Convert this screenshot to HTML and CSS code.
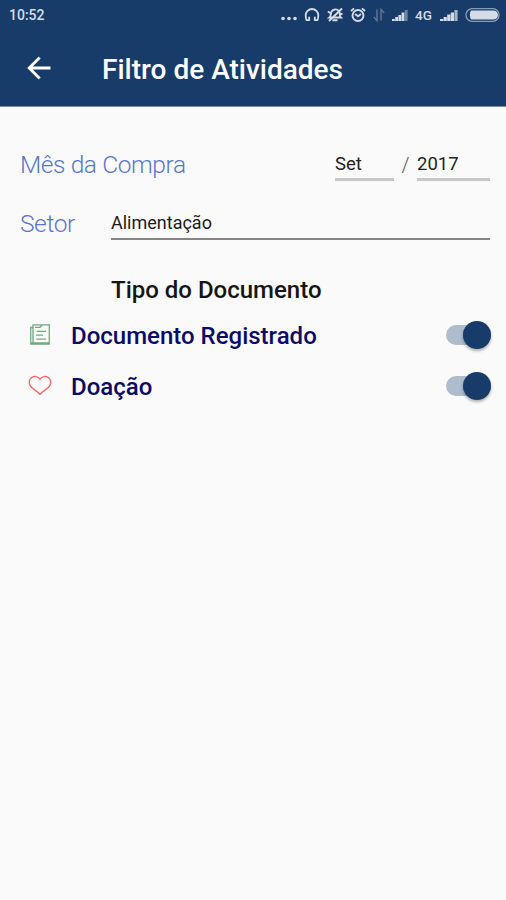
FILE: index.html
```html
<!DOCTYPE html>
<html lang="pt-BR">
<head>
    <meta charset="utf-8">
    <meta name="viewport" content="width=device-width, initial-scale=1.0">
    <title>Filtro de Atividades</title>
    <link rel="stylesheet" href="styles.css">
</head>
<body>
    <header class="header">
        <div class="status-bar">
            <span class="time">10:52</span>
            <div class="status-icons">
                <svg class="dots" width="16" height="16" viewBox="0 0 16 16" fill="currentColor"><circle cx="2" cy="11.500" r="1.800"/><circle cx="8" cy="11.500" r="1.800"/><circle cx="14" cy="11.500" r="1.800"/></svg>
                <svg width="16" height="16" viewBox="0 0 16 16" fill="none" stroke="currentColor" stroke-width="1.800"><path d="M5.500 13.200H2.600C1.900 12 1.700 10.500 1.700 8.300a6.300 6.300 0 0 1 12.600 0c0 2.200-.2 3.700-.9 4.900h-2.900M5.200 9.800v4M10.800 9.800v4"/></svg>
                <svg width="16" height="16" viewBox="0 0 16 16" fill="none" stroke="currentColor" stroke-width="1.900"><path d="M2.500 10.500c1.500-1.200.9-3.700 2-5.700C6 2 10 1.500 12 4.200c1.700 2.400 0 4.600 1.800 6.300H2.500zM5.500 13.200h5M.8 4.500l2.500 1.500M15 1.500L2 14M12.500 7h3"/></svg>
                <svg width="16" height="16" viewBox="0 0 16 16" fill="none" stroke="currentColor" stroke-width="1.900"><circle cx="8" cy="8.500" r="5.500"/><path d="M5 7l3 2.300L11 7M1 4l3-2.600M15 4l-3-2.600"/></svg>
                <svg class="data" width="12" height="16" viewBox="0 0 12 16" fill="none" stroke="currentColor" stroke-width="1.500"><path d="M4 2.500v11L.8 10M8 13.500v-11L11.200 6"/></svg>
                <svg class="signal" width="16" height="16" viewBox="0 0 16 16" fill="currentColor"><path d="M0 11h2.800v2H0zM3.200 9h2.800v4H3.200zM6.400 7h2.800v6H6.400zM9.600 4.500h2.800V13H9.600z"/><path d="M12.800 2h2.800v11h-2.800z" opacity=".45"/></svg>
                <span class="network">4G</span>
                <svg class="signal" width="18" height="16" viewBox="0 0 18 16" fill="currentColor"><path d="M0 11h3.200v2H0zM3.600 9h3.200v4H3.600zM7.200 6.500h3.200V13H7.200zM10.800 4.500H14V13h-3.200z"/><path d="M14.400 2h3.200v11h-3.200z" opacity=".75"/></svg>
                <svg width="35" height="16" viewBox="0 0 35 16"><rect x="1" y="1.700" width="33" height="12.600" rx="6" fill="none" stroke="currentColor" stroke-width="1.300" opacity=".6"/><path d="M6 3.500h22.500a4.500 4.500 0 0 1 0 9H6c-1.500-2.500-1.500-6.500 0-9z" fill="currentColor"/></svg>
            </div>
        </div>
        <div class="app-bar">
            <svg class="back" width="24" height="24" viewBox="0 0 24 24" fill="none" stroke="currentColor" stroke-width="2.800"><path d="M23.500 12H2M12.700 1.500L2.200 12l10.500 10.500"/></svg>
            <h1>Filtro de Atividades</h1>
        </div>
    </header>
    <main class="content">
        <div class="field-row">
            <span class="label label-month">Mês da Compra</span>
            <span class="select month">Set</span>
            <span class="slash">/</span>
            <span class="select year">2017</span>
        </div>
        <div class="field-row sector-row">
            <span class="label label-sector">Setor</span>
            <span class="input">Alimentação</span>
        </div>
        <h2>Tipo do Documento</h2>
        <div class="option">
            <svg class="option-icon doc" width="24" height="24" viewBox="0 0 24 24" fill="none" stroke="currentColor" stroke-width="1.300"><path d="M5 1.800h16.300v19.400H2.700V4.500H5zM5 4.500v15.200M2.700 20h18.600M7 4.300h5l2-2M8.500 8.400h9.500M8 12.200h7M8.500 16.200h9.500"/></svg>
            <span class="option-name">Documento Registrado</span>
            <span class="switch"><span class="thumb"></span></span>
        </div>
        <div class="option">
            <svg class="option-icon heart" width="24" height="24" viewBox="0 0 24 24" fill="none" stroke="currentColor" stroke-width="1.400"><path d="M12 5.300C10.500 2.200 6.500 1.800 3.700 3.500.5 5.800.5 9.800 3 12.800c2.400 2.900 6 4 9 7.600 3-3.600 6.600-4.700 9-7.600 2.500-3 2.500-7-.7-9.300C17.500 1.800 13.500 2.200 12 5.300z"/></svg>
            <span class="option-name">Doação</span>
            <span class="switch"><span class="thumb"></span></span>
        </div>
    </main>
</body>
</html>
```
FILE: styles.css
```css
body {
    font-family: Roboto, "Liberation Sans", sans-serif;
    margin: 0;
    min-height: 100vh;
    background-color: #fafafa;
}
.header {
    height: 106px;
    background-color: #183c69;
    color: white;
    border-bottom: 1px solid #7f8ba0;
}
.status-bar {
    display: flex;
    justify-content: space-between;
    align-items: center;
    height: 30px;
    padding: 0 6px 0 9px;
    color: #d5dce8;
}
.time {
    font-size: 14px;
    font-weight: 500;
}
.status-icons {
    display: flex;
    align-items: center;
    gap: 7px;
}
.data {
    opacity: 0.35;
}
.signal {
    margin-top: 2px;
}
.network {
    width: 18px;
    font-size: 13.500px;
    font-weight: 500;
}
.app-bar {
    display: flex;
    align-items: center;
    height: 76px;
    padding-left: 27px;
    gap: 51px;
}
.back {
    margin-top: -1px;
}
h1 {
    margin: 4px 0 0;
    font-size: 28px;
    font-weight: 500;
    line-height: 34px;
}
.content {
    padding: 38px 16px 0 20px;
}
.field-row {
    display: flex;
    height: 40px;
}
.label {
    color: #5876cf;
    font-size: 24.500px;
    font-weight: 300;
    letter-spacing: -0.4px;
    line-height: 40px;
    white-space: nowrap;
}
.label-month {
    flex: 1;
}
.label-sector {
    width: 91px;
}
.select {
    box-sizing: border-box;
    height: 36px;
    border-bottom: 3px solid #c8c8c8;
    font-size: 18.500px;
    line-height: 38px;
    color: #222;
}
.month {
    width: 59px;
}
.year {
    width: 73px;
}
.slash {
    width: 23px;
    text-align: center;
    font-size: 20px;
    font-weight: 300;
    line-height: 40px;
    color: #555;
}
.sector-row {
    margin-top: 19px;
}
.input {
    box-sizing: border-box;
    flex: 1;
    height: 36px;
    border-bottom: 2px solid #858585;
    font-size: 18px;
    line-height: 38px;
    color: #1c1c1c;
}
h2 {
    margin: 29px 0 0 91px;
    font-size: 24px;
    font-weight: 500;
    line-height: 34px;
    color: #151515;
}
.option {
    display: flex;
    align-items: center;
    height: 51px;
    margin-top: 2px;
}
.option + .option {
    margin-top: 0;
}
.option-icon {
    margin: 0 19px 0 8px;
}
.doc {
    color: #72a980;
}
.heart {
    color: #f06c70;
}
.option-name {
    flex: 1;
    margin-top: 2px;
    font-size: 24px;
    font-weight: 500;
    color: #0b0b66;
}
.switch {
    display: flex;
    align-items: center;
    justify-content: flex-end;
    width: 45px;
    height: 20px;
    margin-right: -1px;
    border-radius: 10px;
    background-color: #afbccd;
}
.thumb {
    width: 28px;
    height: 28px;
    border-radius: 50%;
    background-color: #183c69;
    box-shadow: 0 2px 3px rgba(0, 0, 0, 0.3);
}
```
